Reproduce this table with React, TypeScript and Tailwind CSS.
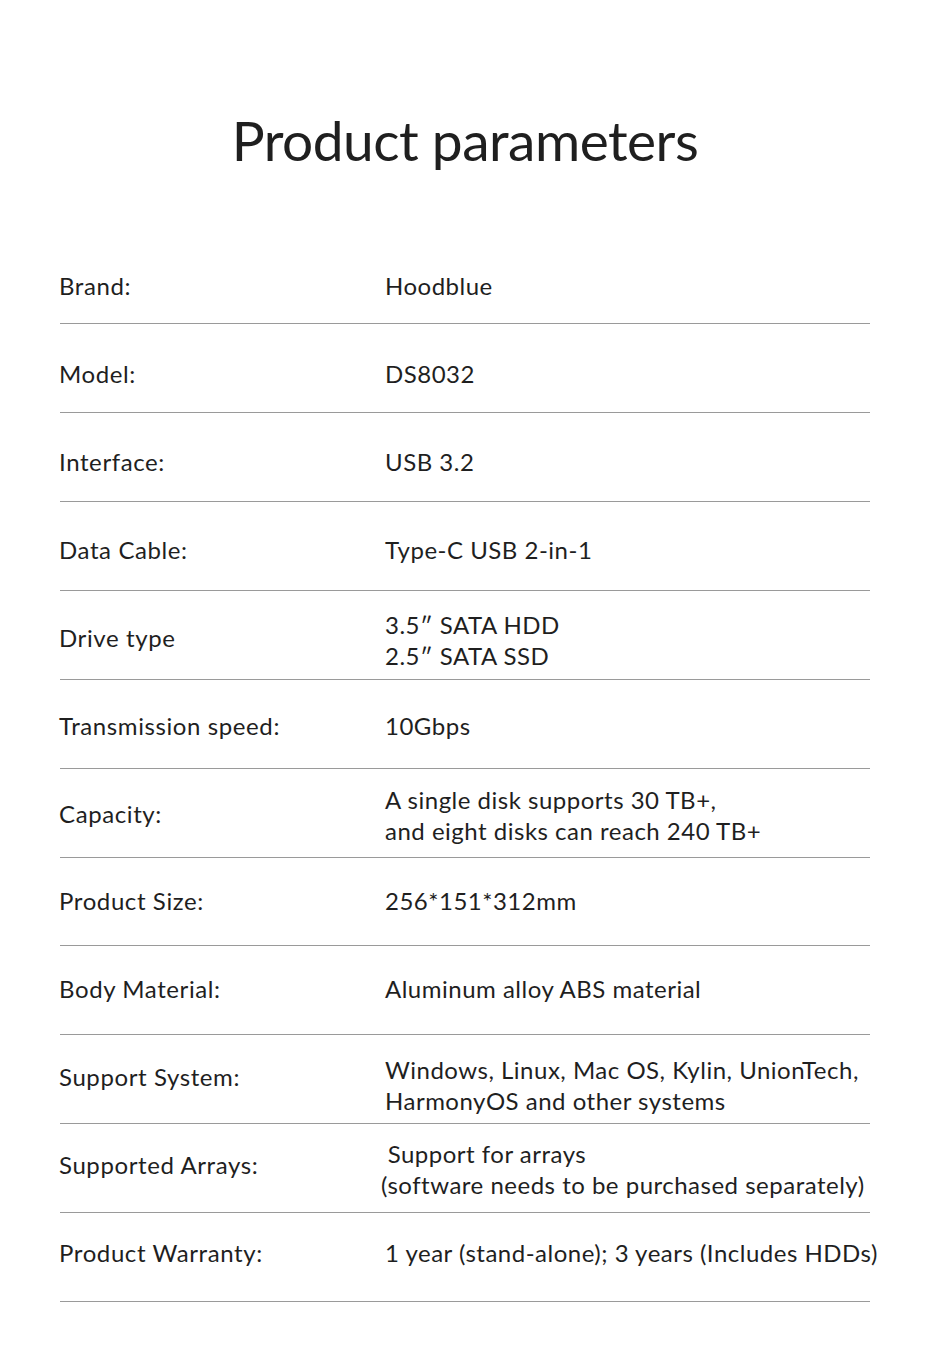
import React from "react";

type Row = {
  label: string;
  value: string[];
  indent?: boolean;
  shift?: string;
};

const rows: Row[] = [
  { label: "Brand:", value: ["Hoodblue"] },
  { label: "Model:", value: ["DS8032"] },
  { label: "Interface:", value: ["USB 3.2"] },
  { label: "Data Cable:", value: ["Type-C USB 2-in-1"] },
  { label: "Drive type", value: ["3.5\u2033 SATA HDD", "2.5\u2033 SATA SSD"], shift: "translate-y-[3px]" },
  { label: "Transmission speed:", value: ["10Gbps"] },
  { label: "Capacity:", value: ["A single disk supports 30 TB+,", "and eight disks can reach 240 TB+"], shift: "translate-y-[2px]" },
  { label: "Product Size:", value: ["256*151*312mm"] },
  { label: "Body Material:", value: ["Aluminum alloy ABS material"] },
  { label: "Support System:", value: ["Windows, Linux, Mac OS, Kylin, UnionTech,", "HarmonyOS and other systems"], shift: "translate-y-[9px]" },
  { label: "Supported Arrays:", value: [" Support for arrays", "(software needs to be purchased separately)"], indent: true, shift: "translate-y-[5px]" },
  { label: "Product Warranty:", value: ["1 year (stand-alone); 3 years (Includes HDDs)"] },
];

export default function App() {
  return (
    <div
      className="w-[930px] h-[1355px] bg-white text-[#1f1f1f]"
      style={{ fontFamily: "Lato, 'Noto Sans', sans-serif" }}
    >
      <h1 className="pt-[105px] text-center text-[55px] leading-[70px] font-normal tracking-[-0.5px]">
        Product parameters
      </h1>

      <div className="mt-[60px] px-[60px]">
        {rows.map((r, i) => {
          // text drifts ~1px up per row relative to the rule spacing
          const off = 12 - 2 * i;
          return (
            <div
              key={r.label}
              className={`flex items-center border-b border-[#9a9a9a] ${i === 7 ? "h-[88px]" : "h-[89px]"}`}
              style={{ paddingTop: Math.max(off, 0), paddingBottom: Math.max(-off, 0) }}
            >
              <div className="w-[326px] shrink-0 -ml-px text-[24px] leading-[31px] tracking-[0.6px]">
                {r.label}
              </div>
              <div
                className={`whitespace-nowrap text-[24px] leading-[31px] tracking-[0.5px] ${r.indent ? "-ml-[4px]" : ""} ${r.shift ?? ""}`}
              >
                {r.value.map((v, j) => (
                  <div key={j} className="whitespace-pre">
                    {v}
                  </div>
                ))}
              </div>
            </div>
          );
        })}
      </div>
    </div>
  );
}
